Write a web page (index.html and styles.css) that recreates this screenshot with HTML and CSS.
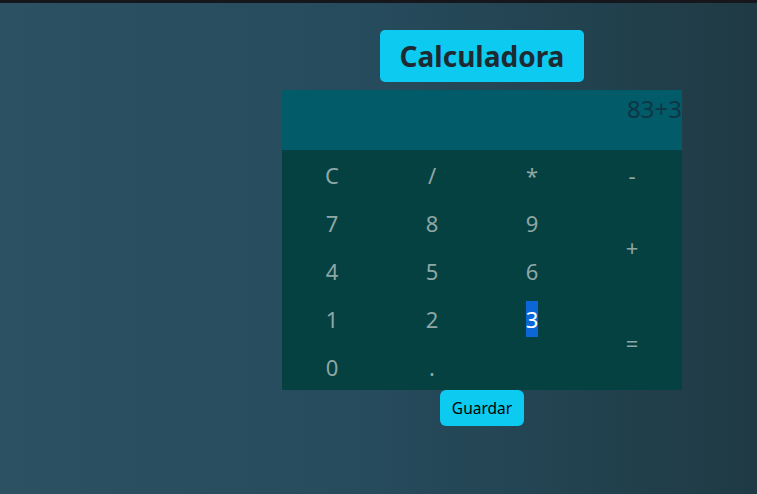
FILE: index.html
```html
<!DOCTYPE html>
<html lang="es">
<head>
<meta charset="utf-8">
<title>Calculadora</title>
<link rel="stylesheet" href="styles.css">
</head>
<body>
<div class="topbar"></div>
<main class="page">
  <div class="column">
    <h1 class="title">Calculadora</h1>
    <div class="calc">
      <div class="display">83+3</div>
      <div class="keys">
        <div class="key">C</div>
        <div class="key">/</div>
        <div class="key">*</div>
        <div class="key">-</div>
        <div class="key">7</div>
        <div class="key">8</div>
        <div class="key">9</div>
        <div class="key tall">+</div>
        <div class="key">4</div>
        <div class="key">5</div>
        <div class="key">6</div>
        <div class="key">1</div>
        <div class="key">2</div>
        <div class="key"><span class="sel">3</span></div>
        <div class="key tall">=</div>
        <div class="key">0</div>
        <div class="key">.</div>
      </div>
    </div>
    <button class="save">Guardar</button>
  </div>
</main>
</body>
</html>
```
FILE: styles.css
```css
html, body {
  margin: 0;
  height: 100%;
}
body {
  background: linear-gradient(to right, #2b5162 0%, #264b5c 50%, #1f3a44 100%);
  font-family: "Noto Sans", "Open Sans", sans-serif;
  color: #212529;
  overflow: hidden;
}
.topbar {
  height: 3px;
  background: #16171c;
}
.page {
  display: flex;
  padding-left: 282px;
  padding-top: 27px;
}
.column {
  width: 400px;
  display: flex;
  flex-direction: column;
  align-items: center;
}
.title {
  margin: 0 0 8px;
  background: #0dcaf0;
  border-radius: 5px;
  font-size: 28px;
  font-weight: 700;
  line-height: 52px;
  height: 52px;
  padding: 0 20px;
  color: #1d2a32;
}
.calc {
  width: 400px;
}
.display {
  height: 60px;
  background: #015b69;
  color: #0e3644;
  font-size: 24px;
  line-height: 38px;
  text-align: right;
}
.keys {
  background: #064142;
  display: grid;
  grid-template-columns: repeat(4, 100px);
  grid-template-rows: repeat(5, 48px);
}
.key {
  display: flex;
  align-items: center;
  justify-content: center;
  font-size: 22px;
  line-height: 36px;
  color: #8ea7a5;
  padding-top: 2px;
}
.key.tall {
  grid-column: 4;
  grid-row: span 2;
}
.sel {
  background: #0b66d6;
  color: #ffffff;
}
.save {
  background: #0dcaf0;
  border: none;
  border-radius: 6px;
  font-family: "Noto Sans", "Open Sans", sans-serif;
  font-size: 15.5px;
  line-height: 24px;
  padding: 6px 12px;
  color: #000;
}
```
